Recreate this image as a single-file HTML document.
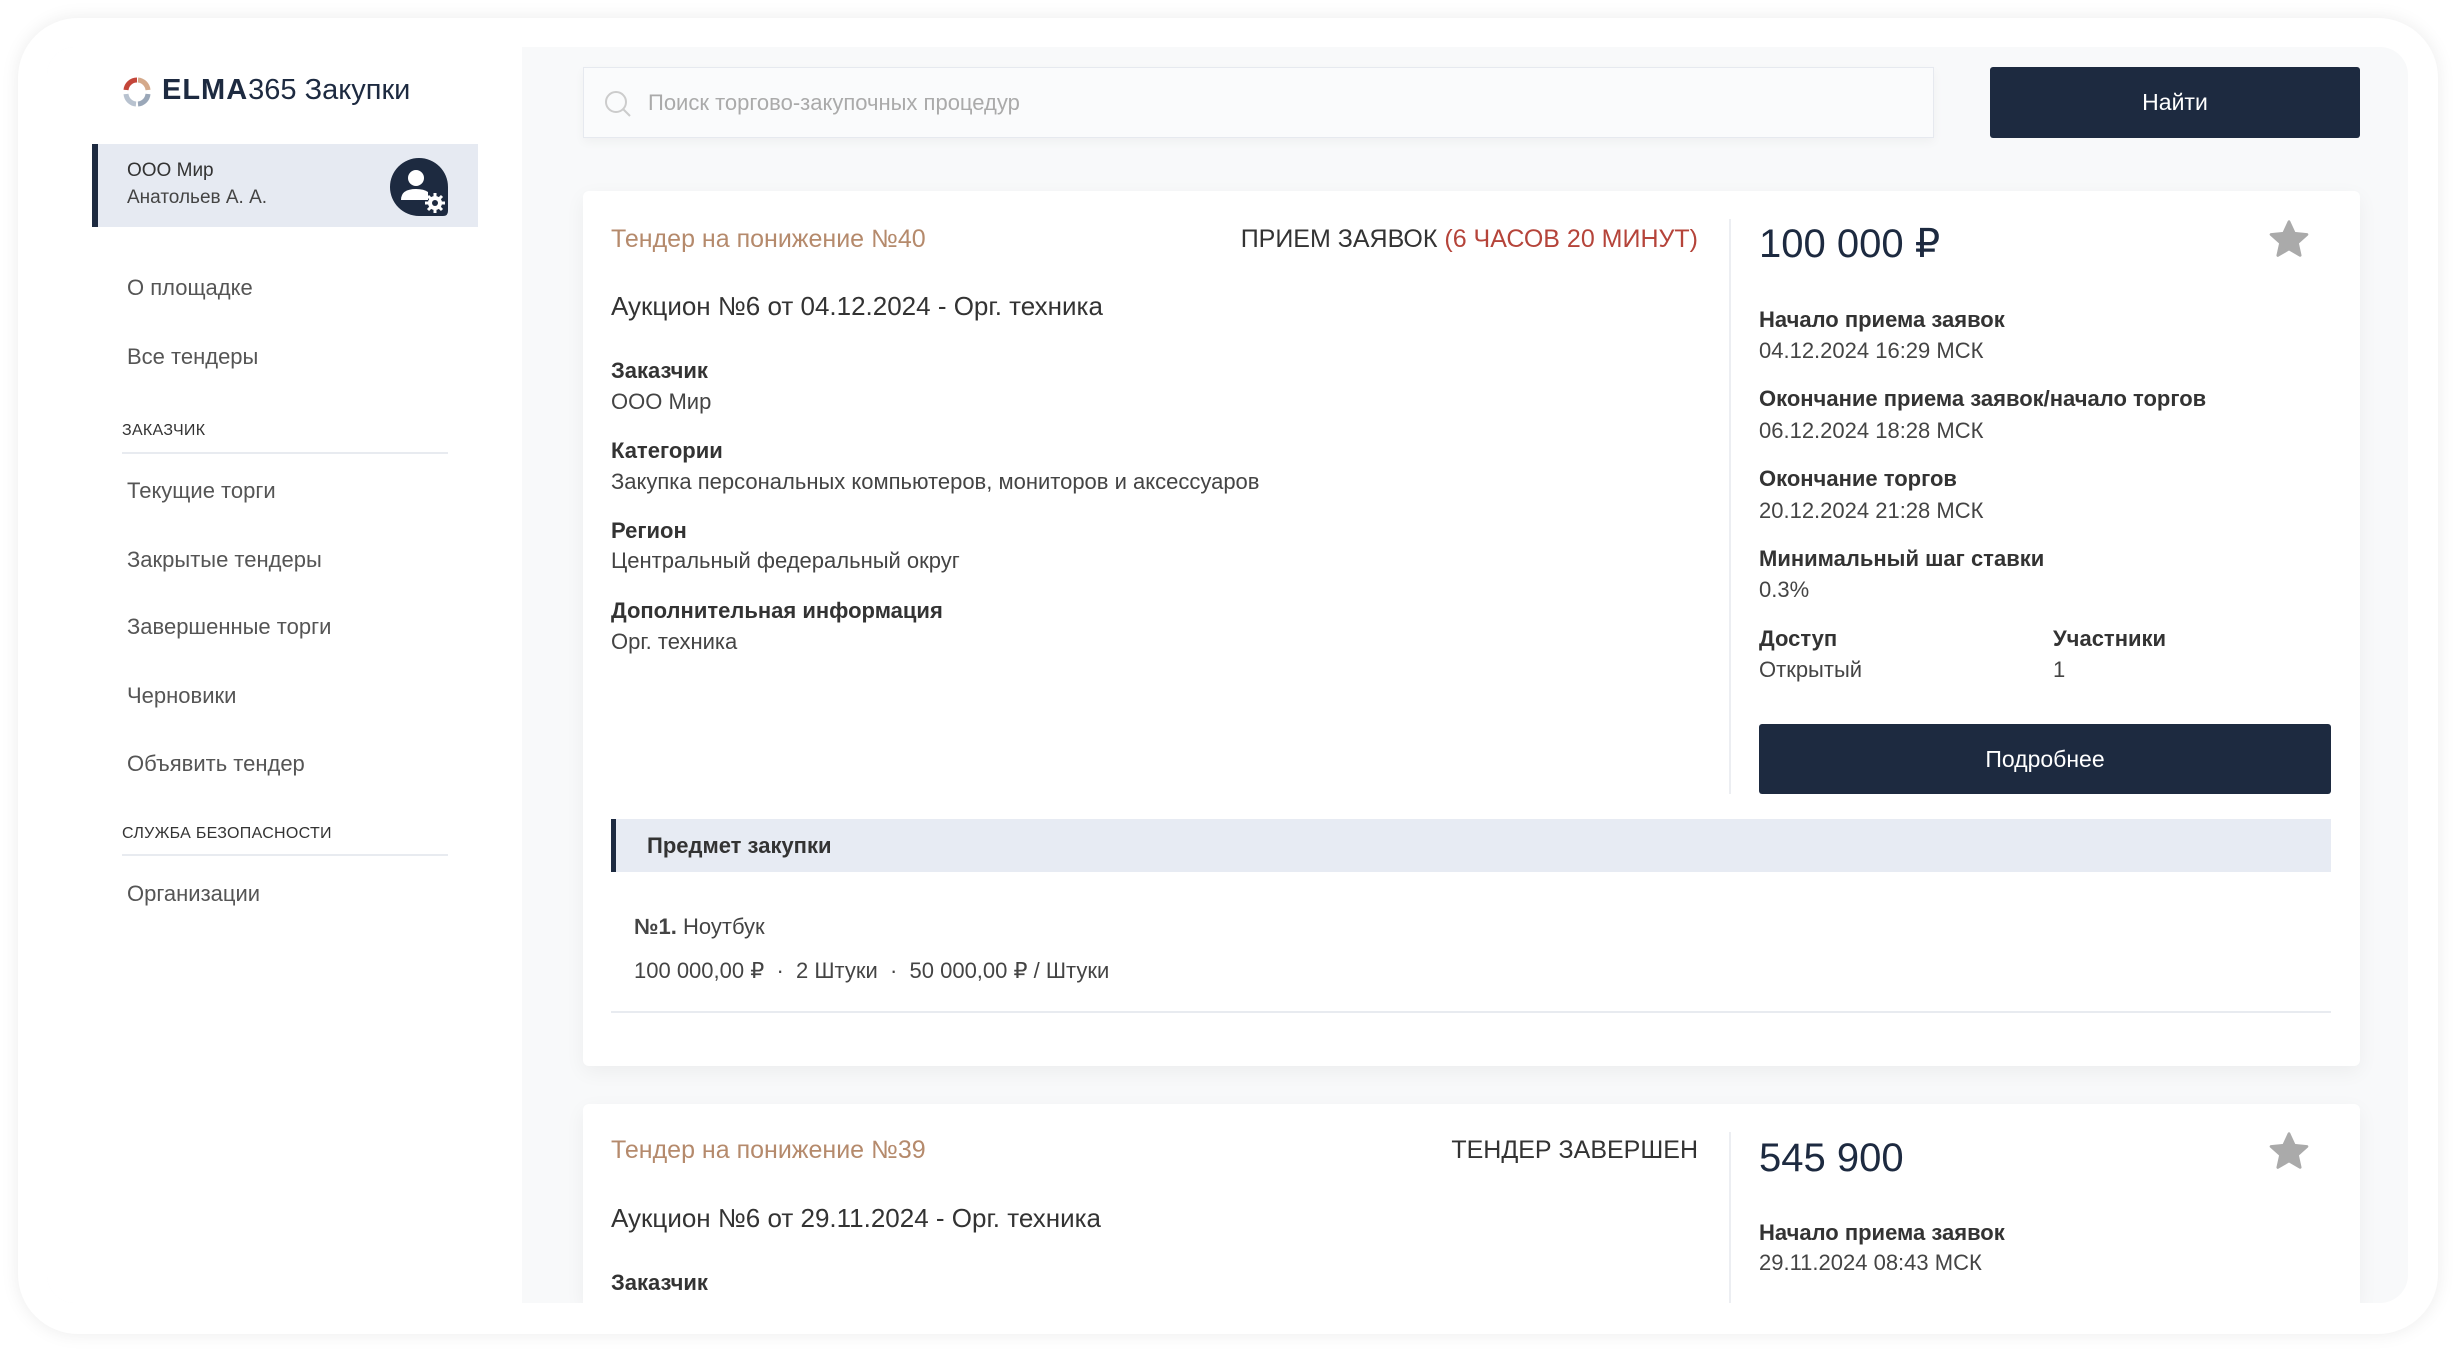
<!DOCTYPE html>
<html><head><meta charset="utf-8"><style>
*{margin:0;padding:0;box-sizing:border-box}
html,body{overflow:hidden}
body{width:2456px;height:1352px;background:#fff;font-family:"Liberation Sans",sans-serif;color:#333;position:relative;overflow:hidden}
.frame{position:absolute;left:18px;top:18px;width:2420px;height:1316px;border-radius:60px;background:#fff;box-shadow:0 0 18px rgba(0,0,0,.08)}
.inner{position:absolute;left:47px;top:47px;width:2361px;height:1256px;border-radius:28px;overflow:hidden;background:#f8f9fa}
.side{position:absolute;left:0;top:0;width:475px;height:100%;background:#fff}
.a{position:absolute;white-space:nowrap}
.nav{font-size:22px;color:#555;left:80px}
.sec{font-size:16px;color:#333;left:75px;letter-spacing:.3px}
.line{position:absolute;height:2px;background:#e8ebf0}
.card{position:absolute;background:#fff;border-radius:6px;box-shadow:0 6px 20px rgba(0,0,0,.05);overflow:hidden}
.lab{font-size:22px;font-weight:bold;color:#333}
.val{font-size:22px;color:#444}
.btn{position:absolute;background:#1d2a40;color:#fff;font-size:23px;display:flex;align-items:center;justify-content:center;border-radius:3px}
</style></head><body>
<div class="frame"></div>
<div class="inner">
 <div class="side">
  <svg class="a" style="left:74px;top:29px" width="32" height="32" viewBox="0 0 32 32">
   <path d="M5 14 A11 11 0 0 1 16 4" stroke="#c4463a" stroke-width="5" fill="none"/>
   <path d="M17 4 A11 11 0 0 1 27 14" stroke="#d4a98a" stroke-width="5" fill="none"/>
   <path d="M27 18 A11 11 0 0 1 17 28" stroke="#9aa7b8" stroke-width="5" fill="none"/>
   <path d="M15 28 A11 11 0 0 1 5 18" stroke="#b8c2cf" stroke-width="5" fill="none"/>
  </svg>
  <div class="a" style="left:115px;top:27px;font-size:29px;color:#1d2a40"><b style="letter-spacing:1px">ELMA</b>365 Закупки</div>
  <div class="a" style="left:45px;top:97px;width:386px;height:83px;background:#e6eaf2;border-left:6px solid #1d2a40"></div>
  <div class="a" style="left:80px;top:113px;font-size:19px;color:#333">ООО Мир</div>
  <div class="a" style="left:80px;top:140px;font-size:19px;color:#444">Анатольев А. А.</div>
  <svg class="a" style="left:341px;top:109px" width="62" height="62" viewBox="0 0 62 62">
   <path d="M31 2 A29 29 0 1 0 31 60 L55 60 Q60 60 60 55 L60 31 A29 29 0 0 0 31 2Z" fill="#1d2a40"/>
   <circle cx="28" cy="22" r="8" fill="#fff"/>
   <path d="M13 44 Q13 33 28 33 Q36 33 40 36 L40 44Z" fill="#fff"/>
   <circle cx="47" cy="47" r="7" fill="#fff"/>
   <g stroke="#fff" stroke-width="3"><path d="M47 37v20M37 47h20M40 40l14 14M54 40l-14 14"/></g>
   <circle cx="47" cy="47" r="3" fill="#1d2a40"/>
  </svg>
  <div class="a nav" style="top:228px">О площадке</div>
  <div class="a nav" style="top:297px">Все тендеры</div>
  <div class="a sec" style="top:375px">ЗАКАЗЧИК</div>
  <div class="line" style="left:75px;top:405px;width:326px"></div>
  <div class="a nav" style="top:431px">Текущие торги</div>
  <div class="a nav" style="top:500px">Закрытые тендеры</div>
  <div class="a nav" style="top:567px">Завершенные торги</div>
  <div class="a nav" style="top:636px">Черновики</div>
  <div class="a nav" style="top:704px">Объявить тендер</div>
  <div class="a sec" style="top:778px">СЛУЖБА БЕЗОПАСНОСТИ</div>
  <div class="line" style="left:75px;top:807px;width:326px"></div>
  <div class="a nav" style="top:834px">Организации</div>
 </div>
 <div class="a" style="left:536px;top:20px;width:1351px;height:71px;background:#fafbfc;border:1px solid #e6e9ef;box-shadow:0 4px 10px rgba(0,0,0,.04)"></div>
 <svg class="a" style="left:556px;top:42px" width="30" height="30" viewBox="0 0 30 30"><circle cx="13" cy="13" r="10" stroke="#ccc" stroke-width="2" fill="none"/><path d="M20 20l7 7" stroke="#ccc" stroke-width="2"/></svg>
 <div class="a" style="left:601px;top:43px;font-size:22px;color:#aaa">Поиск торгово-закупочных процедур</div>
 <div class="btn" style="left:1943px;top:20px;width:370px;height:71px">Найти</div>

 <div class="card" style="left:536px;top:144px;width:1777px;height:875px">
  <div class="a" style="left:28px;top:34px;font-size:25px;color:#b58a6c">Тендер на понижение №40</div>
  <div class="a" style="right:662px;top:34px;font-size:25px;color:#333">ПРИЕМ ЗАЯВОК <span style="color:#b5443a">(6 ЧАСОВ 20 МИНУТ)</span></div>
  <div class="a" style="left:28px;top:100px;font-size:26px;color:#333">Аукцион №6 от 04.12.2024 - Орг. техника</div>
  <div class="a lab" style="left:28px;top:167px">Заказчик</div>
  <div class="a val" style="left:28px;top:198px">ООО Мир</div>
  <div class="a lab" style="left:28px;top:247px">Категории</div>
  <div class="a val" style="left:28px;top:278px">Закупка персональных компьютеров, мониторов и аксессуаров</div>
  <div class="a lab" style="left:28px;top:327px">Регион</div>
  <div class="a val" style="left:28px;top:357px">Центральный федеральный округ</div>
  <div class="a lab" style="left:28px;top:407px">Дополнительная информация</div>
  <div class="a val" style="left:28px;top:438px">Орг. техника</div>
  <div class="a" style="left:1146px;top:28px;width:2px;height:575px;background:#eceef2"></div>
  <div class="a" style="left:1176px;top:30px;font-size:40px;color:#1d2a40">100 000 ₽</div>
  <svg class="a" style="left:1684px;top:27px" width="44" height="44" viewBox="0 0 24 24"><path d="M12 2l2.9 6.3 6.9.7-5.2 4.6 1.5 6.8L12 16.9 5.9 20.4l1.5-6.8L2.2 9l6.9-.7z" fill="#aaa" stroke="#aaa" stroke-linejoin="round" stroke-width="1.5"/></svg>
  <div class="a lab" style="left:1176px;top:116px">Начало приема заявок</div>
  <div class="a val" style="left:1176px;top:147px">04.12.2024 16:29 МСК</div>
  <div class="a lab" style="left:1176px;top:195px">Окончание приема заявок/начало торгов</div>
  <div class="a val" style="left:1176px;top:227px">06.12.2024 18:28 МСК</div>
  <div class="a lab" style="left:1176px;top:275px">Окончание торгов</div>
  <div class="a val" style="left:1176px;top:307px">20.12.2024 21:28 МСК</div>
  <div class="a lab" style="left:1176px;top:355px">Минимальный шаг ставки</div>
  <div class="a val" style="left:1176px;top:386px">0.3%</div>
  <div class="a lab" style="left:1176px;top:435px">Доступ</div>
  <div class="a val" style="left:1176px;top:466px">Открытый</div>
  <div class="a lab" style="left:1470px;top:435px">Участники</div>
  <div class="a val" style="left:1470px;top:466px">1</div>
  <div class="btn" style="left:1176px;top:533px;width:572px;height:70px">Подробнее</div>
  <div class="a" style="left:28px;top:628px;width:1720px;height:53px;background:#e7ebf3;border-left:5px solid #1d2a40"></div>
  <div class="a" style="left:64px;top:642px;font-size:22px;font-weight:bold;color:#333">Предмет закупки</div>
  <div class="a val" style="left:51px;top:723px"><b>№1.</b> Ноутбук</div>
  <div class="a val" style="left:51px;top:767px">100 000,00 ₽ &nbsp;·&nbsp; 2 Штуки &nbsp;·&nbsp; 50 000,00 ₽ / Штуки</div>
  <div class="a" style="left:28px;top:820px;width:1720px;height:2px;background:#e8ebf0"></div>
 </div>

 <div class="card" style="left:536px;top:1057px;width:1777px;height:199px;border-radius:6px 6px 0 0">
  <div class="a" style="left:28px;top:32px;font-size:25px;color:#b58a6c">Тендер на понижение №39</div>
  <div class="a" style="right:662px;top:32px;font-size:25px;color:#333">ТЕНДЕР ЗАВЕРШЕН</div>
  <div class="a" style="left:28px;top:99px;font-size:26px;color:#333">Аукцион №6 от 29.11.2024 - Орг. техника</div>
  <div class="a lab" style="left:28px;top:166px">Заказчик</div>
  <div class="a" style="left:1146px;top:28px;width:2px;height:171px;background:#eceef2"></div>
  <div class="a" style="left:1176px;top:32px;font-size:40px;color:#1d2a40">545 900</div>
  <svg class="a" style="left:1684px;top:26px" width="44" height="44" viewBox="0 0 24 24"><path d="M12 2l2.9 6.3 6.9.7-5.2 4.6 1.5 6.8L12 16.9 5.9 20.4l1.5-6.8L2.2 9l6.9-.7z" fill="#aaa" stroke="#aaa" stroke-linejoin="round" stroke-width="1.5"/></svg>
  <div class="a lab" style="left:1176px;top:116px">Начало приема заявок</div>
  <div class="a val" style="left:1176px;top:146px">29.11.2024 08:43 МСК</div>
 </div>
</div>
</body></html>
